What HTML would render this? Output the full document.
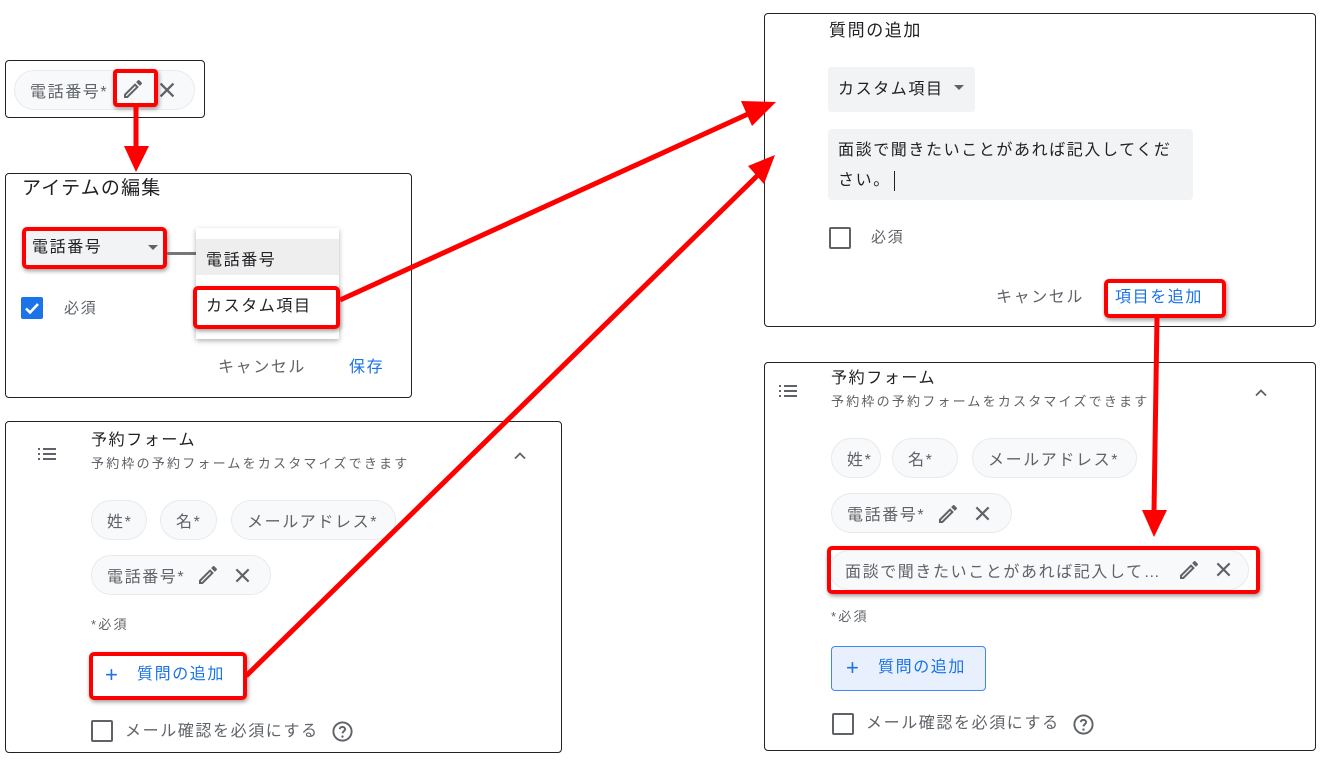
<!DOCTYPE html>
<html><head><meta charset="utf-8"><style>
*{box-sizing:border-box;margin:0;padding:0}
body{width:1344px;height:765px;background:#fff;position:relative;overflow:hidden;font-family:"Liberation Sans","Noto Sans CJK JP",sans-serif;color:#3c4043}
.a{position:absolute;white-space:nowrap;letter-spacing:1.6px}
.box{position:absolute;border:1px solid #222;border-radius:4px;background:#fff}
.chip{position:absolute;background:#f8f9fa;border:1px solid #e8eaed;border-radius:20px;font-size:16px;color:#5f6368;display:flex;align-items:center;padding-left:15px;letter-spacing:1.6px;white-space:nowrap}
.red{position:absolute;border:4px solid #f00;border-radius:5px;box-shadow:1px 2px 4px rgba(0,0,0,.4)}
.cb{position:absolute;width:22px;height:22px;border:2px solid #5f6368;border-radius:2px}
.sub{letter-spacing:2.2px}
svg.ic{position:absolute}
</style></head><body>

<!-- box1 -->
<div class="box" style="left:5px;top:60px;width:200px;height:58px"></div>
<div class="chip" style="left:14px;top:70px;width:181px;height:40px">電話番号*</div>
<svg class="ic" style="left:121px;top:77px" width="24" height="24" viewBox="0 0 24 24"><path d="M3 17.25V21h3.75L17.8 9.94l-3.75-3.75L3 17.25zM5.9 19H5v-.9l9.06-9.06.9.9L5.9 19zM20.7 7.04a1 1 0 000-1.41l-2.34-2.34a1 1 0 00-1.41 0l-1.83 1.83 3.75 3.75 1.83-1.83z" fill="#5f6368"/></svg>
<svg class="ic" style="left:156px;top:79px" width="22" height="22" viewBox="0 0 24 24"><path d="M5 5L19 19M19 5L5 19" stroke="#5f6368" stroke-width="2.5"/></svg>
<div class="red" style="left:113px;top:69px;width:45px;height:38px;border-radius:4px"></div>

<!-- box2 -->
<div class="box" style="left:5px;top:173px;width:407px;height:225px"></div>
<div class="a" style="left:22px;top:176px;font-size:19px;color:#202124;line-height:26px;letter-spacing:1.2px">アイテムの編集</div>
<div class="a" style="left:26px;top:231px;width:138px;height:35px;background:#f1f3f4"></div>
<div class="a" style="left:32px;top:236px;font-size:16px;color:#202124;line-height:24px">電話番号</div>
<div class="a" style="left:148px;top:245px;border:5px solid transparent;border-top-color:#5f6368"></div>
<div class="red" style="left:22px;top:227px;width:145px;height:42px"></div>
<div class="a" style="left:167px;top:252px;width:29px;height:3px;background:#777"></div>
<div class="a" style="left:196px;top:228px;width:143px;height:111px;background:#fff;box-shadow:0 2px 5px rgba(0,0,0,.3)"></div>
<div class="a" style="left:196px;top:239px;width:143px;height:36px;background:#eee"></div>
<div class="a" style="left:206px;top:249px;font-size:16px;color:#202124;line-height:24px">電話番号</div>
<div class="a" style="left:206px;top:295px;font-size:16px;color:#202124;line-height:24px">カスタム項目</div>
<div class="red" style="left:193px;top:286px;width:147px;height:43px"></div>
<div class="a" style="left:21px;top:297px;width:22px;height:22px;background:#1a73e8;border-radius:2px"></div>
<svg class="ic" style="left:21px;top:297px" width="22" height="22" viewBox="0 0 22 22"><path d="M5 11.5l4 4 8-8.5" stroke="#fff" stroke-width="2.6" fill="none"/></svg>
<div class="a" style="left:64px;top:298px;font-size:15px;color:#5f6368;line-height:22px">必須</div>
<div class="a" style="left:218px;top:357px;font-size:16px;color:#5f6368;line-height:22px">キャンセル</div>
<div class="a" style="left:349px;top:357px;font-size:16px;color:#1a73e8;line-height:22px">保存</div>

<!-- box3 -->
<div class="box" style="left:5px;top:421px;width:557px;height:332px"></div>
<svg class="ic" style="left:36px;top:445px" width="22" height="18" viewBox="0 0 22 18"><path d="M2 4h2M7 4h13M2 9h2M7 9h13M2 14h2M7 14h13" stroke="#5f6368" stroke-width="2"/></svg>
<div class="a" style="left:91px;top:430px;font-size:16px;color:#202124;line-height:22px">予約フォーム</div>
<div class="a sub" style="left:91px;top:454px;font-size:13px;color:#5f6368;line-height:20px">予約枠の予約フォームをカスタマイズできます</div>
<svg class="ic" style="left:510px;top:446px" width="20" height="20" viewBox="0 0 24 24"><path d="M6 15l6-6 6 6" stroke="#5f6368" stroke-width="2.2" fill="none"/></svg>
<div class="chip" style="left:91px;top:500px;width:56px;height:40px">姓*</div>
<div class="chip" style="left:160px;top:500px;width:57px;height:40px">名*</div>
<div class="chip" style="left:231px;top:500px;width:165px;height:40px">メールアドレス*</div>
<div class="chip" style="left:91px;top:555px;width:180px;height:40px">電話番号*</div>
<svg class="ic" style="left:196px;top:563px" width="24" height="24" viewBox="0 0 24 24"><path d="M3 17.25V21h3.75L17.8 9.94l-3.75-3.75L3 17.25zM5.9 19H5v-.9l9.06-9.06.9.9L5.9 19zM20.7 7.04a1 1 0 000-1.41l-2.34-2.34a1 1 0 00-1.41 0l-1.83 1.83 3.75 3.75 1.83-1.83z" fill="#5f6368"/></svg>
<svg class="ic" style="left:232px;top:565px" width="21" height="21" viewBox="0 0 24 24"><path d="M5 5L19 19M19 5L5 19" stroke="#5f6368" stroke-width="2.5"/></svg>
<div class="a sub" style="left:91px;top:615px;font-size:13px;color:#5f6368;line-height:20px">*必須</div>
<div class="a" style="left:105px;top:661px;font-size:22px;color:#1a73e8;line-height:28px">+</div>
<div class="a" style="left:137px;top:663px;font-size:16px;color:#1a73e8;line-height:24px">質問の追加</div>
<div class="red" style="left:89px;top:652px;width:158px;height:48px"></div>
<div class="cb" style="left:91px;top:720px"></div>
<div class="a" style="left:125px;top:720px;font-size:16px;color:#5f6368;line-height:24px">メール確認を必須にする</div>
<svg class="ic" style="left:331px;top:720px" width="23" height="23" viewBox="0 0 24 24"><circle cx="12" cy="12" r="9.5" stroke="#5f6368" stroke-width="2" fill="none"/><path d="M9 9.5a3 3 0 015.8 0c0 2-2.8 2.2-2.8 4.5" stroke="#5f6368" stroke-width="2" fill="none"/><circle cx="12" cy="17.3" r="1.2" fill="#5f6368"/></svg>

<!-- box4 -->
<div class="box" style="left:764px;top:13px;width:552px;height:314px"></div>
<div class="a" style="left:829px;top:19px;font-size:17px;color:#202124;line-height:24px">質問の追加</div>
<div class="a" style="left:828px;top:67px;width:147px;height:45px;background:#f1f3f4;border-radius:3px"></div>
<div class="a" style="left:838px;top:78px;font-size:16px;color:#202124;line-height:24px">カスタム項目</div>
<div class="a" style="left:954px;top:85px;border:5px solid transparent;border-top-color:#5f6368"></div>
<div class="a" style="left:828px;top:129px;width:365px;height:71px;background:#f1f3f4;border-radius:4px"></div>
<div class="a" style="left:838px;top:136px;font-size:16px;color:#202124;line-height:30px;white-space:normal;width:345px">面談で聞きたいことがあれば記入してください。<span style="display:inline-block;width:1px;height:20px;background:#202124;vertical-align:middle;margin-left:3px"></span></div>
<div class="cb" style="left:829px;top:227px"></div>
<div class="a" style="left:871px;top:227px;font-size:15px;color:#5f6368;line-height:22px">必須</div>
<div class="a" style="left:996px;top:287px;font-size:16px;color:#5f6368;line-height:22px">キャンセル</div>
<div class="a" style="left:1115px;top:287px;font-size:16px;color:#1a73e8;line-height:22px">項目を追加</div>
<div class="red" style="left:1104px;top:279px;width:122px;height:39px"></div>

<!-- box5 -->
<div class="box" style="left:764px;top:362px;width:552px;height:389px"></div>
<svg class="ic" style="left:777px;top:382px" width="22" height="18" viewBox="0 0 22 18"><path d="M2 4h2M7 4h13M2 9h2M7 9h13M2 14h2M7 14h13" stroke="#5f6368" stroke-width="2"/></svg>
<div class="a" style="left:831px;top:368px;font-size:16px;color:#202124;line-height:22px">予約フォーム</div>
<div class="a sub" style="left:831px;top:392px;font-size:13px;color:#5f6368;line-height:20px">予約枠の予約フォームをカスタマイズできます</div>
<svg class="ic" style="left:1251px;top:383px" width="20" height="20" viewBox="0 0 24 24"><path d="M6 15l6-6 6 6" stroke="#5f6368" stroke-width="2.2" fill="none"/></svg>
<div class="chip" style="left:831px;top:438px;width:50px;height:40px">姓*</div>
<div class="chip" style="left:892px;top:438px;width:66px;height:40px">名*</div>
<div class="chip" style="left:972px;top:438px;width:165px;height:40px">メールアドレス*</div>
<div class="chip" style="left:831px;top:493px;width:181px;height:40px">電話番号*</div>
<svg class="ic" style="left:936px;top:502px" width="24" height="24" viewBox="0 0 24 24"><path d="M3 17.25V21h3.75L17.8 9.94l-3.75-3.75L3 17.25zM5.9 19H5v-.9l9.06-9.06.9.9L5.9 19zM20.7 7.04a1 1 0 000-1.41l-2.34-2.34a1 1 0 00-1.41 0l-1.83 1.83 3.75 3.75 1.83-1.83z" fill="#5f6368"/></svg>
<svg class="ic" style="left:972px;top:503px" width="21" height="21" viewBox="0 0 24 24"><path d="M5 5L19 19M19 5L5 19" stroke="#5f6368" stroke-width="2.5"/></svg>
<div class="chip" style="left:829px;top:550px;width:420px;height:40px">面談で聞きたいことがあれば記入して…</div>
<svg class="ic" style="left:1177px;top:558px" width="24" height="24" viewBox="0 0 24 24"><path d="M3 17.25V21h3.75L17.8 9.94l-3.75-3.75L3 17.25zM5.9 19H5v-.9l9.06-9.06.9.9L5.9 19zM20.7 7.04a1 1 0 000-1.41l-2.34-2.34a1 1 0 00-1.41 0l-1.83 1.83 3.75 3.75 1.83-1.83z" fill="#5f6368"/></svg>
<svg class="ic" style="left:1213px;top:559px" width="21" height="21" viewBox="0 0 24 24"><path d="M5 5L19 19M19 5L5 19" stroke="#5f6368" stroke-width="2.5"/></svg>
<div class="red" style="left:827px;top:546px;width:433px;height:48px"></div>
<div class="a sub" style="left:831px;top:607px;font-size:13px;color:#5f6368;line-height:20px">*必須</div>
<div class="a" style="left:831px;top:646px;width:155px;height:45px;background:#e8f0fe;border:1px solid #4285f4;border-radius:4px"></div>
<div class="a" style="left:846px;top:654px;font-size:22px;color:#1a73e8;line-height:28px">+</div>
<div class="a" style="left:878px;top:656px;font-size:16px;color:#1a73e8;line-height:24px">質問の追加</div>
<div class="cb" style="left:832px;top:713px"></div>
<div class="a" style="left:866px;top:712px;font-size:16px;color:#5f6368;line-height:24px">メール確認を必須にする</div>
<svg class="ic" style="left:1072px;top:713px" width="23" height="23" viewBox="0 0 24 24"><circle cx="12" cy="12" r="9.5" stroke="#5f6368" stroke-width="2" fill="none"/><path d="M9 9.5a3 3 0 015.8 0c0 2-2.8 2.2-2.8 4.5" stroke="#5f6368" stroke-width="2" fill="none"/><circle cx="12" cy="17.3" r="1.2" fill="#5f6368"/></svg>

<!-- arrows -->
<svg style="position:absolute;left:0;top:0" width="1344" height="765">
<g stroke="#f00" stroke-width="5" fill="#f00">
<line x1="136" y1="107" x2="136" y2="148"/>
<polygon points="124,146 149,146 136,172" stroke="none"/>
<line x1="340" y1="300" x2="748" y2="114"/>
<polygon points="776,102 741,101 752,126" stroke="none"/>
<line x1="246" y1="676" x2="758" y2="175"/>
<polygon points="775,155 748,166 764,184" stroke="none"/>
<line x1="1157" y1="318" x2="1154" y2="512"/>
<polygon points="1142,510 1167,510 1154,537" stroke="none"/>
</g>
</svg>
</body></html>
